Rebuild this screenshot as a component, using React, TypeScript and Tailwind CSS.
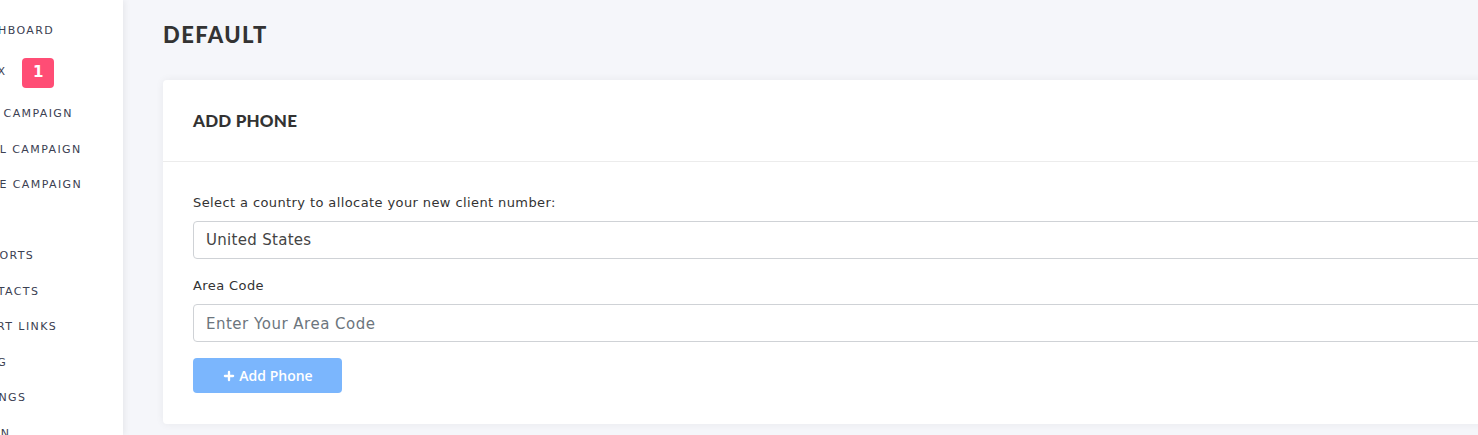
import { Plus } from 'lucide-react';

const navItems = [
  { label: 'DASHBOARD', shift: 'ml-[-29px]' },
  { label: 'INBOX', shift: 'ml-[-35px]', badge: 1 },
  { label: 'SMS CAMPAIGN', shift: 'ml-[-29px]' },
  { label: 'EMAIL CAMPAIGN', shift: 'ml-[-33px]' },
  { label: 'VOICE CAMPAIGN', shift: 'ml-[-33px]' },
  { label: '', shift: '' },
  { label: 'REPORTS', shift: 'ml-[-26px]' },
  { label: 'CONTACTS', shift: 'ml-[-31px]' },
  { label: 'SHORT LINKS', shift: 'ml-[-31px]' },
  { label: 'LOG', shift: 'ml-[-20px]' },
  { label: 'SETTINGS', shift: 'ml-[-39px]' },
  { label: 'LOGIN', shift: 'ml-[-31px]' },
];

export default function App() {
  return (
    <div
      className="flex h-[435px] w-[1478px] overflow-hidden bg-[#f5f6fa]"
      style={{ fontFamily: '"DejaVu Sans", "Open Sans", sans-serif' }}
    >
      <aside className="relative z-10 w-[123px] shrink-0 overflow-hidden bg-white pt-[13px] shadow-[2px_0_6px_rgba(0,0,0,0.06)]">
        <ul>
          {navItems.map((item, i) => (
            <li
              key={i}
              className={`flex items-center whitespace-nowrap text-[11px] tracking-[1.4px] text-[#3b4052] ${
                item.badge ? 'h-[48px]' : 'h-[35.5px]'
              }`}
            >
              <span className={item.shift}>{item.label}</span>
              {item.badge && (
                <span className="ml-[16px] flex h-[30px] w-[32px] items-center justify-center rounded-[4px] bg-[#ff4d75] text-[15px] font-bold text-white tracking-normal">
                  {item.badge}
                </span>
              )}
            </li>
          ))}
        </ul>
      </aside>

      <main className="min-w-0 flex-1 pl-[40px] pt-[20px]">
        <h1
          className="text-[22px] font-black leading-[30px] tracking-[1.4px] text-[#333]"
          style={{ fontFamily: 'Lato, "Open Sans", sans-serif' }}
        >
          DEFAULT
        </h1>

        <div className="mr-[-40px] mt-[30px] rounded-[4px] bg-white shadow-[0_0_8px_rgba(0,0,0,0.06)]">
          <div className="flex h-[82px] items-center border-b border-[#ececec] px-[30px]">
            <h2
              className="text-[17px] font-black tracking-[0.2px] text-[#333]"
              style={{ fontFamily: 'Lato, "Open Sans", sans-serif' }}
            >
              ADD PHONE
            </h2>
          </div>

          <div className="px-[30px] pb-[31px] pt-[31px]">
            <label className="block text-[13px] leading-[20px] tracking-[0.4px] text-[#333]">
              Select a country to allocate your new client number:
            </label>
            <div className="mt-[8px] flex h-[38px] items-center rounded-[4px] border border-[#cfd2d6] px-[12px] pt-[1px] text-[15px] tracking-[0.3px] text-[#444]">
              United States
            </div>

            <label className="mt-[17px] block text-[13px] leading-[20px] tracking-[0.4px] text-[#333]">
              Area Code
            </label>
            <input
              className="mt-[8px] block h-[38px] w-full rounded-[4px] border border-[#cfd2d6] px-[12px] pt-[1px] text-[15px] tracking-[0.5px] text-[#444] outline-none placeholder:text-[#6c757d]"
              placeholder="Enter Your Area Code"
            />

            <button
              className="mt-[16px] flex h-[35px] w-[149px] items-center justify-center gap-[3px] rounded-[4px] bg-[#7bb6fd] text-[14px] font-semibold text-white"
              style={{ fontFamily: '"Open Sans", sans-serif' }}
            >
              <Plus size={14} strokeWidth={4} />
              Add Phone
            </button>
          </div>
        </div>
      </main>
    </div>
  );
}
